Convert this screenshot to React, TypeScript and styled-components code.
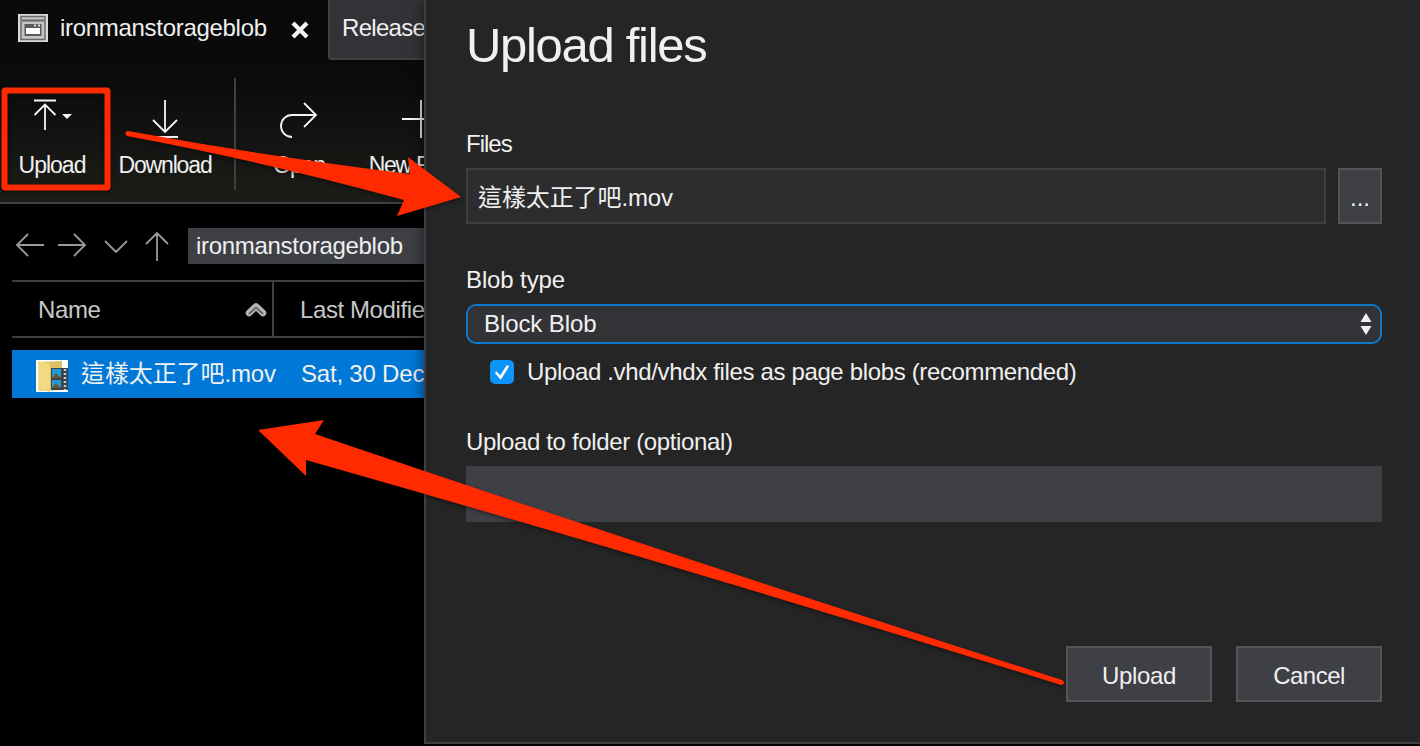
import React from 'react';
import styled, { createGlobalStyle } from 'styled-components';

const Global = createGlobalStyle`
  * { box-sizing: border-box; }
  body { margin: 0; background: #000; }
`;

const Page = styled.div`
  position: relative;
  display: flex;
  width: 1420px;
  height: 746px;
  overflow: hidden;
  background: #000;
  color: #f0f0f0;
  font-family: "Liberation Sans", "Noto Sans CJK TC", sans-serif;
  font-size: 24px;
`;

const Text = styled.span<{ $ls?: number; $size?: number; $color?: string }>`
  display: block;
  white-space: nowrap;
  line-height: 28px;
  font-size: ${(p) => p.$size ?? 24}px;
  letter-spacing: ${(p) => p.$ls ?? -0.35}px;
  color: ${(p) => p.$color ?? '#f0f0f0'};
`;

const Explorer = styled.main`
  width: 424px;
  flex: none;
  overflow: hidden;
  background: #000;
`;

const Header = styled.header`
  height: 204px;
  border-bottom: 2px solid #3f3f46;
  background: linear-gradient(#090909 0, #0b0b0b 78px, #1c1c18 202px);
`;

const Tabs = styled.div`
  display: flex;
  height: 78px;
  align-items: flex-start;
`;

const ActiveTab = styled.div`
  display: flex;
  flex: none;
  width: 328px;
  padding: 14px 0 0 18px;
  & > svg { flex: none; }
`;

const TabTitle = styled.div`
  width: 242px;
  padding-left: 12px;
`;

const OtherTab = styled.div`
  width: 120px;
  flex: none;
  height: 60px;
  padding: 14px 0 0 12px;
  background: #333337;
  border: 2px solid #3f3f46;
  border-top: 0;
  border-radius: 0 0 0 3px;
`;

const Toolbar = styled.div`
  display: flex;
  width: 480px;
  height: 112px;
`;

const Tool = styled.div<{ $w: number }>`
  display: flex;
  flex: none;
  width: ${(p) => p.$w}px;
  flex-direction: column;
  align-items: center;
  gap: 7px;
  padding-top: 16px;
`;

const Separator = styled.div`
  width: 2px;
  flex: none;
  margin-left: 8px;
  background: #3f3f46;
`;

const Nav = styled.nav`
  display: flex;
  height: 76px;
  padding-top: 24px;
  & > svg { flex: none; }
`;

const Address = styled.div`
  width: 240px;
  flex: none;
  height: 36px;
  padding: 4px 0 0 8px;
  background: #3f3f46;
`;

const Columns = styled.div`
  display: flex;
  width: 440px;
  height: 58px;
  margin-left: 12px;
`;

const Column = styled.div<{ $w: number }>`
  display: flex;
  flex: none;
  align-items: center;
  justify-content: space-between;
  width: ${(p) => p.$w}px;
  padding: 2px 5px 0 26px;
  border: solid #3f3f46;
  border-width: 2px 2px 2px 0;
`;

const FileRow = styled.div`
  display: flex;
  height: 48px;
  margin: 12px 0 0 12px;
  padding: 10px 0 0 24px;
  background: #0078d7;
  & > svg { flex: none; }
`;

const FileName = styled.div`
  width: 233px;
  flex: none;
  padding-left: 13px;
`;

const Panel = styled.section`
  display: flex;
  flex-direction: column;
  width: 996px;
  height: 744px;
  padding: 14px 38px 40px 40px;
  background: #252526;
  border-left: 2px solid #3f3f46;
  border-bottom: 2px solid #3f3f46;
  box-shadow: -2px 0 12px rgba(0, 0, 0, 0.45);
`;

const Title = styled.h1`
  margin: 0;
  height: 116px;
  font-size: 49px;
  line-height: 63px;
  font-weight: 400;
  letter-spacing: -1.3px;
`;

const Label = styled.div`
  height: 38px;
`;

const FileLine = styled.div`
  display: flex;
  gap: 12px;
  height: 56px;
  margin-bottom: 42px;
`;

const FileInput = styled.div`
  flex: 1;
  padding: 14px 0 0 10px;
  background: #2d2d30;
  border: 2px solid #3f3f40;
`;

const Button = styled.div<{ $w: number }>`
  display: flex;
  width: ${(p) => p.$w}px;
  height: 56px;
  align-items: center;
  justify-content: center;
  padding-top: 4px;
  background: #3f3f46;
  border: 2px solid #555;
`;

const Select = styled.div`
  display: flex;
  height: 40px;
  justify-content: space-between;
  padding: 4px 8px 0 16px;
  background: #333337;
  border: 2px solid #0e79cb;
  border-radius: 10px;
`;

const CheckLine = styled.div`
  display: flex;
  gap: 13px;
  height: 84px;
  padding: 14px 0 0 24px;
`;

const CheckBox = styled.div`
  display: flex;
  width: 24px;
  height: 24px;
  margin-top: 2px;
  border-radius: 5px;
  background: #0d94fb;
`;

const FolderInput = styled.div`
  height: 56px;
  background: #3f3f46;
`;

const Actions = styled.div`
  display: flex;
  justify-content: flex-end;
  gap: 24px;
  margin-top: auto;
`;

const Overlay = styled.svg`
  position: absolute;
  inset: 0;
  filter: drop-shadow(0 2px 2px rgba(0, 0, 0, 0.4));
`;

type StrokeProps = { w: number; h: number; d: string; c?: string; children?: React.ReactNode };

const Stroke = ({ w, h, d, c = '#f5f5f5', children }: StrokeProps) => (
  <svg width={w} height={h} fill="none" stroke={c} strokeWidth="1.8">
    <path d={d} />
    {children}
  </svg>
);

export default function App() {
  return (
    <>
      <Global />
      <Page>
        <Explorer>
          <Header>
            <Tabs>
              <ActiveTab>
                <svg width="30" height="28" fill="none">
                  <rect width="30" height="28" fill="#d8d8d8" />
                  <rect x="3" y="2.5" width="24" height="23" fill="#c4c4c4" stroke="#6a6a6a" strokeWidth="1.5" />
                  <path d="M4 6.500H26" stroke="#666" strokeWidth="2" />
                  <rect x="6.5" y="10" width="17" height="12" fill="#5a5a5a" />
                  <path d="M8 14H22V20H8Z" fill="#fff" />
                  <path d="M16 11.5h2M20 11.5h2" stroke="#ddd" strokeWidth="2" />
                </svg>
                <TabTitle><Text $ls={-0.3}>ironmanstorageblob</Text></TabTitle>
                <svg width="20" height="32" stroke="#f5f5f5" strokeWidth="4.2">
                  <path d="M3 9L17 23M17 9L3 23" />
                </svg>
              </ActiveTab>
              <OtherTab><Text $ls={-0.7}>Release</Text></OtherTab>
            </Tabs>
            <Toolbar>
              <Tool $w={104}>
                <Stroke w={104} h={50} d="M34 6.5H56M45 36V11M34.500 21L45 10.500L55.500 21">
                  <path d="M62 20H72L67 25Z" fill="#f5f5f5" stroke="none" />
                </Stroke>
                <Text $size={23} $ls={-1}>Upload</Text>
              </Tool>
              <Tool $w={122}>
                <Stroke w={122} h={50} d="M61 6V37M49 26L61 38L73 26M49 43H74" />
                <Text $size={23} $ls={-1.15}>Download</Text>
              </Tool>
              <Separator />
              <Tool $w={126}>
                <Stroke w={126} h={50} d="M80 21H56A11 11 0 0 0 56 43M68 9L80 21L68 33" />
                <Text $size={23} $ls={-1.2}>Open</Text>
              </Tool>
              <Tool $w={118}>
                <Stroke w={118} h={50} d="M40 25H78M59 6V44" />
                <Text $size={23} $ls={-1.3}>New Folder</Text>
              </Tool>
            </Toolbar>
          </Header>
          <Nav>
            <Stroke w={188} h={36} c="#999" d="M44 17H17M28 6L17 17L28 28M58 17H85M74 6L85 17L74 28M105 13L116 24L127 13M157 33V5M146 16L157 5L168 16" />
            <Address><Text $ls={-0.3}>ironmanstorageblob</Text></Address>
          </Nav>
          <Columns>
            <Column $w={262}>
              <Text $color="#c8c8c8">Name</Text>
              <svg width="22" height="18" fill="none" strokeLinejoin="round" strokeLinecap="round">
                <path d="M4 12L11 5.500L18 12" stroke="#b8b8b8" strokeWidth="6.5" />
                <path d="M4.500 12.500L11 6.500L17.500 12.500" stroke="#666" strokeWidth="1.8" />
              </svg>
            </Column>
            <Column $w={178}><Text $color="#c8c8c8" $ls={-0.4}>Last Modifie</Text></Column>
          </Columns>
          <FileRow>
            <svg width="32" height="32">
              <rect width="32" height="32" fill="#fff" />
              <path d="M3 2L26 1V30L3 31Z" fill="#dfc164" />
              <rect x="15" y="8" width="17" height="22" fill="#3b434a" />
              <path d="M16 9H25V18H16ZM16 20H25V28H16Z" fill="#219bd9" />
              <path d="M16 18L20 13L25 18ZM16 28L20 23L25 28Z" fill="#6c5526" />
              <path d="M29 9V30" stroke="#c3ccd1" strokeWidth="2.5" strokeDasharray="2 2" />
              <path d="M2 1L14 4V32L2 29Z" fill="#f2da83" />
            </svg>
            <FileName><Text $ls={-0.1}>這樣太正了吧.mov</Text></FileName>
            <Text $ls={-0.2}>Sat, 30 Dec</Text>
          </FileRow>
        </Explorer>
        <Panel>
          <Title>Upload files</Title>
          <Label><Text $ls={-1}>Files</Text></Label>
          <FileLine>
            <FileInput><Text $ls={-0.1}>這樣太正了吧.mov</Text></FileInput>
            <Button $w={44}><Text $ls={0}>...</Text></Button>
          </FileLine>
          <Label><Text $ls={-0.12}>Blob type</Text></Label>
          <Select>
            <Text $ls={-0.1}>Block Blob</Text>
            <svg width="12" height="32" fill="#f0f0f0"><path d="M0.500 12L6 3L11.500 12ZM0.500 16L6 25L11.500 16Z" /></svg>
          </Select>
          <CheckLine>
            <CheckBox><svg width="24" height="24" fill="none" stroke="#fff" strokeWidth="2.600" strokeLinecap="round"><path d="M6.500 13L10.500 17.500L17.500 6.500" /></svg></CheckBox>
            <Text>Upload .vhd/vhdx files as page blobs (recommended)</Text>
          </CheckLine>
          <Label><Text>Upload to folder (optional)</Text></Label>
          <FolderInput />
          <Actions>
            <Button $w={146}><Text>Upload</Text></Button>
            <Button $w={146}><Text $ls={-0.5}>Cancel</Text></Button>
          </Actions>
        </Panel>
        <Overlay width="1420" height="746">
          <rect x="4.500" y="90.500" width="103" height="97" rx="1" fill="none" stroke="#ff2a00" strokeWidth="6" />
          <path d="M128 131Q265 156 410 174L408 157L461 197L397 216L404 200Q262 161 127 136Q123 132 128 131Z" fill="#ff2a00" />
          <path d="M258 430L324 420L315 434Q689 561 1062 680Q1067 684 1061 685Q683 567 306 460V476Z" fill="#ff2a00" />
        </Overlay>
      </Page>
    </>
  );
}
